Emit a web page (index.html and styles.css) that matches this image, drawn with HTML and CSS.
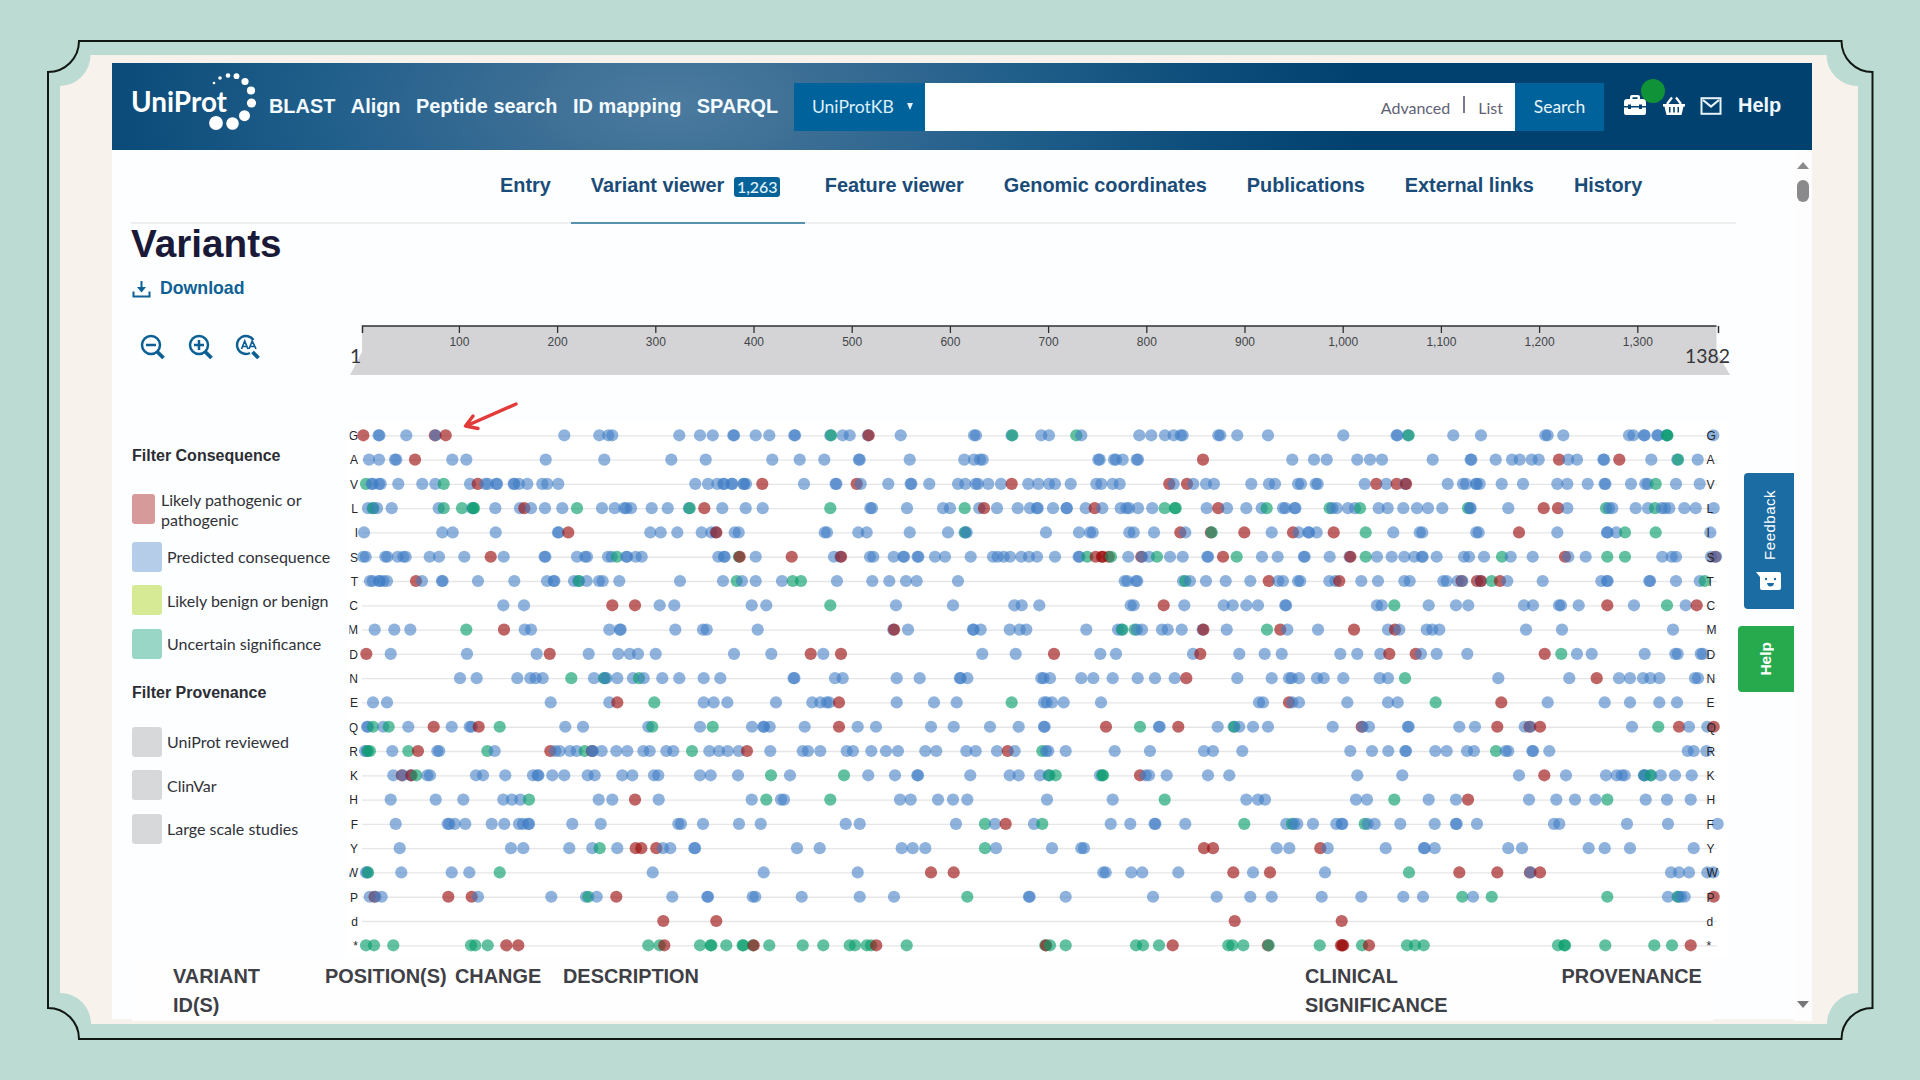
FILE: index.html
```html
<!DOCTYPE html>
<html lang="en">
<head>
<meta charset="utf-8">
<title>Variants | UniProtKB</title>
<link rel="stylesheet" href="styles.css">
</head>
<body>
<svg class="frame" viewBox="0 0 1920 1080" aria-hidden="true">
  <path class="frame-fill" d="M90.500 55H1826.500A31 31 0 0 0 1858 86V993A31 31 0 0 0 1827 1024H91A31 31 0 0 0 60 993V86A31 31 0 0 0 90.500 55Z"/>
  <path class="frame-line" d="M79 41H1841.500A31 31 0 0 0 1872.500 72V1008A31 31 0 0 0 1841.500 1039H79A31 31 0 0 0 48 1008V72A31 31 0 0 0 79 41Z"/>
</svg>
<div class="window">
  <header class="topbar">
    <svg class="logo" viewBox="0 0 130 60">
      <text x="0" y="40.500" textLength="96" lengthAdjust="spacingAndGlyphs">UniProt</text>
      <circle cx="83" cy="12" r="1.300"/><circle cx="89" cy="7" r="1.800"/><circle cx="97" cy="4.500" r="2.300"/>
      <circle cx="105.500" cy="5.200" r="2.900"/><circle cx="114" cy="10.500" r="3.600"/><circle cx="120" cy="19.500" r="4.100"/>
      <circle cx="120.500" cy="32" r="4.600"/><circle cx="113.500" cy="44.700" r="5.500"/><circle cx="101.500" cy="52.500" r="6.300"/><circle cx="85" cy="52" r="6.900"/>
    </svg>
    <nav class="mainnav"><a>BLAST</a><a>Align</a><a>Peptide search</a><a>ID mapping</a><a>SPARQL</a></nav>
    <div class="search">
      <button class="db">UniProtKB <span class="caret"></span></button>
      <div class="field"><span>Advanced</span><i></i><span>List</span></div>
      <button class="go">Search</button>
    </div>
    <div class="tools">
      <div class="toolbox">
        <svg width="24" height="22" viewBox="0 0 24 22"><path fill="#fff" fill-rule="evenodd" d="M7 5V3Q7 1 9 1h6q2 0 2 2v2h3q3 0 3 3v4h-4v-1.500h-3V12H8v-1.500H5V12H1V8q0-3 3-3zM9.500 5h5V3.300h-5zM1 13.500h4V15h3v-1.500h8V15h3v-1.500h4V19q0 2-2 2H3q-2 0-2-2z"/></svg>
        <span class="dot"></span>
      </div>
      <svg class="basket" width="24" height="20" viewBox="0 0 24 20"><path fill="#fff" fill-rule="evenodd" d="M1 8h22v2.500h-1.500L19.500 19h-15L2.500 10.500H1zM7 11v5.500h1.500V11zm4.200 0v5.500h1.600V11zm4.300 0v5.500H17V11z"/><path d="M5 8L10 1.500M19 8L14 1.500" stroke="#fff" stroke-width="2.200" fill="none"/></svg>
      <svg class="mail" width="22" height="18" viewBox="0 0 22 18"><rect x="1.500" y="1.200" width="19" height="15.600" fill="none" stroke="#e8f3fa" stroke-width="2"/><path d="M3 3L11 9.500L19 3" fill="none" stroke="#e8f3fa" stroke-width="2.200"/></svg>
      <a>Help</a>
    </div>
  </header>
  <main>
    <nav class="tabs"><a>Entry</a><a class="active">Variant viewer<b>1,263</b></a><a>Feature viewer</a><a>Genomic coordinates</a><a>Publications</a><a>External links</a><a>History</a></nav>
    <h1>Variants</h1>
    <a class="download"><svg width="19" height="18" viewBox="0 0 19 18"><path d="M1.500 11.500V16.500H17.500V11.500" fill="none" stroke="currentColor" stroke-width="2"/><path d="M9.500 1V9" stroke="currentColor" stroke-width="2"/><path d="M5 7H14L9.500 12.500Z" fill="currentColor"/></svg>Download</a>
    <div class="viewer">
      <div class="zooms">
        <svg viewBox="0 0 26 26"><circle cx="11" cy="11" r="9"/><path class="handle" d="M17 17.500L23.500 24"/><path d="M6 11H16"/></svg>
        <svg viewBox="0 0 26 26"><circle cx="11" cy="11" r="9"/><path class="handle" d="M17 17.500L23.500 24"/><path d="M6 11H16M11 6V16"/></svg>
        <svg viewBox="0 0 26 26"><path d="M18.500 6A9 9 0 1 0 15 19"/><path class="handle" d="M17.500 18L23.500 24"/><path class="thin" d="M6.500 15L9.700 7L13 15M7.500 12.500H12M14 15L17.200 7L21 15M15.200 12.500H19.500"/></svg>
      </div>
      <svg class="ruler" id="ruler" viewBox="0 0 1400 104"></svg>
      <aside class="filters">
        <h2>Filter Consequence</h2>
        <ul>
          <li class="wrap"><i class="path"></i>Likely pathogenic or<br>pathogenic</li>
          <li><i class="pred"></i>Predicted consequence</li>
          <li><i class="benign"></i>Likely benign or benign</li>
          <li><i class="unc"></i>Uncertain significance</li>
        </ul>
        <h2>Filter Provenance</h2>
        <ul>
          <li><i></i>UniProt reviewed</li>
          <li><i></i>ClinVar</li>
          <li><i></i>Large scale studies</li>
        </ul>
      </aside>
      <svg class="plot" id="plot" viewBox="0 0 1400 542"></svg>
    </div>
    <div class="thead"><span>VARIANT<br>ID(S)</span><span>POSITION(S)</span><span>CHANGE</span><span>DESCRIPTION</span><span>CLINICAL<br>SIGNIFICANCE</span><span>PROVENANCE</span></div>
    <div class="scrollbar"><span class="up"></span><span class="thumb"></span><span class="down"></span></div>
    <div class="side feedback"><svg width="26" height="22" viewBox="0 0 26 22"><path fill="#fff" d="M0 1H23Q25 1 25 3V17Q25 19 23 19H6Q4 19 4 17V6Z"/><circle cx="10" cy="8" r="1.200" fill="#1b6ca3"/><circle cx="19" cy="8" r="1.200" fill="#1b6ca3"/><path d="M11 12H18Q17.500 15.500 14.500 15.500T11 12Z" fill="#1b6ca3"/></svg><span>Feedback</span></div>
    <div class="side help"><span>Help</span></div>
  </main>
</div>
<script src="chart.js"></script>
</body>
</html>
```
FILE: styles.css
```css
* { box-sizing: border-box; margin: 0; padding: 0; }
body { width: 1920px; height: 1080px; overflow: hidden; background: #bcdbd2; padding: 63px 108px 61px 112px; font-family: "Liberation Sans", sans-serif; }
button { border: 0; font: inherit; }
.frame { position: absolute; left: 0; top: 0; width: 1920px; height: 1080px; }
.frame-fill { fill: #f7f2eb; }
.frame-line { fill: none; stroke: #111813; stroke-width: 2; }
.window { position: relative; width: 1700px; height: 956px; background: #fcfeff; display: flex; flex-direction: column; }

.topbar { height: 87px; flex: none; display: flex; align-items: center; padding-left: 19px; background: radial-gradient(ellipse 690px 330px at 560px 40px, #4b7b9f 0%, #3f7096 18%, #215f8b 50%, #0d4d7b 78%, #00416f 100%); }
.logo { width: 130px; height: 60px; fill: #fff; margin-top: -11px; flex: none; }
.logo text { font: 700 29px Lato, sans-serif; }
.mainnav { display: flex; gap: 15.500px; width: 526px; margin-left: 8px; color: #f4fbff; font-weight: 700; font-size: 19.900px; white-space: nowrap; }
.search { display: flex; width: 810px; height: 48px; margin-left: -1px; flex: none; font-family: Lato, sans-serif; }
.db { width: 131px; background: #00629b; color: #dcf0fb; font-size: 17.500px; padding-left: 18px; display: flex; align-items: center; gap: 13px; }
.caret { border: 3.500px solid transparent; border-top: 7px solid #e3f3fb; border-bottom: 0; }
.field { flex: 1; background: #fff; display: flex; align-items: center; justify-content: flex-end; padding: 2px 12px 0 0; gap: 13px; color: #5f6173; font-size: 16px; }
.field i { width: 2px; height: 17px; background: #77788a; margin-top: -6px; }
.go { width: 89px; background: #00629b; color: #e6f5fc; font-size: 17.500px; }
.tools { display: flex; align-items: center; color: #eff9ff; margin-left: 20px; font-weight: 700; font-size: 20px; }
.toolbox { position: relative; height: 22px; margin-top: -3px; margin-left: -1px; }
.dot { position: absolute; left: 18px; top: -15px; width: 24px; height: 24px; border-radius: 50%; background: #0f9238; }
.basket { margin: -2px 0 0 15px; }
.mail { margin: -2px 0 0 14px; }
.tools a { margin-left: 16px; margin-top: -2px; }

main { position: relative; flex: 1; display: flex; flex-direction: column; }
.tabs { height: 74px; margin: 0 76px 0 19px; padding-left: 349px; display: flex; border-bottom: 2px solid #edf0f3; }
.tabs a { height: 74px; padding: 25px 20px 0; line-height: 20px; font-size: 19.900px; font-weight: 700; color: #1b4c78; white-space: nowrap; border-bottom: 2px solid transparent; letter-spacing: -.02px; }
.tabs .active { border-bottom-color: #5791ab; display: flex; padding-right: 24.500px; }
.tabs b { font: 500 16px/20px Lato, sans-serif; background: #06639a; color: #e2f3fb; border-radius: 3px; width: 46px; height: 20px; margin: 2px 0 0 10px; text-align: center; }
h1 { margin-left: 19px; font-size: 38.700px; line-height: 40px; height: 40px; color: #1a1a38; }
.download { height: 49px; margin: 0 0 1px 20px; display: flex; align-items: center; gap: 9px; color: #0f6195; font-size: 17.700px; font-weight: 700; }
.viewer { display: grid; grid-template-columns: 228px 1400px; grid-template-rows: 104px 542px; }
.zooms { display: flex; gap: 21.500px; padding: 20px 0 0 28px; }
.zooms svg { width: 26px; height: 26px; fill: none; stroke: #0b5f94; stroke-width: 2.500; }
.zooms .handle { stroke-width: 3.800; }
.zooms .thin { stroke-width: 1.700; }
.ruler, .plot { display: block; width: 1400px; }
.ruler { position: relative; z-index: 1; overflow: visible; }
.ruler text { font-size: 12px; fill: #424448; text-anchor: middle; }
.ruler .end { font: 19.400px Lato, sans-serif; text-anchor: start; fill: #36363a; }
.filters { padding: 26px 0 0 20px; }
.filters h2 { font-size: 16px; line-height: 24px; color: #2c2d33; margin-bottom: 22px; }
.filters ul { list-style: none; display: flex; flex-direction: column; gap: 13.600px; margin-bottom: 22px; }
.filters li { height: 30px; display: flex; align-items: center; gap: 5px; font: 16px/20px Lato, sans-serif; color: #303238; white-space: nowrap; padding-top: 1px; }
.filters li i { width: 30px; height: 30px; border-radius: 3px; background: #d6d8da; flex: none; margin-top: -1px; }
.filters .wrap { height: 38px; gap: 6px; }
.filters .wrap i { width: 23px; }
.filters i.path { background: #d79a9b; }
.filters i.pred { background: #b6cde9; }
.filters i.benign { background: #d6e994; }
.filters i.unc { background: #9ad6c6; }
.plot text { font-size: 12px; fill: #26262a; }
.thead { flex: 1; margin-left: 20px; width: 1581px; padding-left: 41px; padding-top: 1.500px; display: grid; grid-template-columns: 152px 130px 108px 742px 256.500px 1fr; background: #fefefe; color: #3f3f46; font-size: 19.900px; line-height: 29.500px; font-weight: 700; white-space: nowrap; }
.scrollbar { position: absolute; right: 0; top: 0; bottom: 0; width: 18px; background: #fdfdfe; display: flex; flex-direction: column; align-items: center; padding: 12px 0 13px; }
.up { border: 6px solid transparent; border-bottom: 7px solid #8a8a8c; border-top: 0; }
.thumb { width: 12px; height: 22px; border-radius: 6px; background: #8a8a8c; margin-top: 11px; }
.down { border: 6px solid transparent; border-top: 7px solid #77777a; border-bottom: 0; margin-top: auto; }
.side { position: absolute; right: 18px; border-radius: 4px 0 0 4px; color: #fff; display: flex; align-items: center; }
.side span { writing-mode: vertical-rl; transform: rotate(180deg); }
.feedback { top: 323px; width: 50px; height: 136px; background: #1b6ca3; flex-direction: column-reverse; padding-bottom: 16px; gap: 11px; font-size: 15px; letter-spacing: .5px; }
.help { top: 476px; width: 56px; height: 66px; background: #27a94d; justify-content: center; font-size: 15.500px; font-weight: 700; }
```
FILE: chart.js
```js
// Dot positions are in thirds of a pixel, split over four windows of the track.
const WINDOWS = [0, 1080, 2160, 3180];
const ROWS = {
G: ["70r 117B 199b 286P 317r 673b 778b 805b 817b 1018b", "0b 38b 101B 167b 208b 284B 392T 428b 449b 505M 602b 822b 828b 936T 1024b 1047b", "49g 64b 238b 274b 315b 341b 362b 368b 475b 481b 532b 624b 850b 1011B", "25T 160b 243b 436b 443b 490b 687b 700b 733B 773B 801T 801g 940b"],
A: ["87b 117b 165b 169b 225r 337b 379b 617b 793b 994b", "17b 217b 299b 373b 478B 629b 793b 822b 840b 848b", "115b 119b 162b 168b 188b 230b 234b 429r 697b 762b 800b 892b 930b 966b", "98b 213B 287b 336b 359b 395b 416b 477r 505b 531b 611B 658r 754b 833T 893b"],
V: ["78g 95b 98b 117b 122b 175b 247b 286b 311g 390b 413r 436b 444b 470B 522B 537b 562b 607b 622b 655b", "-14b 24b 52b 71B 96B 131B 138b 187r 312b 408B 470r 482b 565b 633B 688b 774b 796b 827b 834b 865b 903b 935r 985b 1015b 1047b 1065b", "32b 109b 124b 158b 179b 328r 341b 381r 400b 438b 462b 574b 627b 645b 714b 723b 767b 773b 914b 949r 979b 1010r", "17M 143b 189b 198b 229B 239b 305b 369b 472b 502b 563b 615B 693b 736b 743b 767g 828b 899b"],
L: ["84b 99T 111b 155b 296b 311g 366g 398T 402g 466b 540b 553r 573b 615b 667b 711g 786b 824b 853b 859b 873b 935b 983b 1048T", "13r 67b 137b 188b 391g 511b 516b 621b 729b 750b 794g 838b 852r 891b 953b 990b 1012B 1059b 1100b", "20b 77b 104r 127b 182b 199b 207b 234b 277b 314g 346G 440b 475r 501b 559b 605b 620g 669b 676b 705B 809g 817b 830b 864b 885b 900g 956b 983b", "10b 51b 84b 127b 204g 211B 325b 431r 474r 502b 618g 627b 637b 707b 744b 765g 785b 795b 808b 853b 887b 941b"],
I: ["72b 307b 338b 467b 655B 685r 931b 962b 1012b", "5b 34b 48M 104b 116b 374b 381b 475b 500b 629b 744b 795T 800b 1038b", "57b 90b 98b 208b 221b 282b 361r 376b 454D 553r 635b 699r 716b 746B 770b 821r 917g 1000b", "59b 67b 229b 236b 357r 472b 622B 649b 675g 767g 931b"],
S: ["70b 77b 136b 142b 173b 190b 197b 269b 297b 373b 452r 491b 615B 711b 735b 741b 804b 815b 831g 860B 887b 905b", "55b 73B 118N 167b 275r 402b 422M 510b 520b 581b 611B 654B 705b 735b 812b 879b 893b 911b 930b 964b 987b 1011b 1065b", "57B 82g 107r 127R 146r 153g 205b 245P 267b 291g 330b 368b 443B 489r 530g 606b 653b 733B 809b 870M 917g 951b 995b", "13b 43b 67B 110b 192b 207b 252b 306g 332b 398b 495r 505b 557b 622g 675g 787b 815b 828b 933b 947P"],
T: ["90b 98b 118B 130b 141b 228r 246b 307B 414b 523b 621b 642B 702b 716T 740b 777b 788b 838b 1020b", "69b 110g 126b 167b 246b 278g 303g 411b 517b 568b 618b 650b 774b", "194b 202b 228b 232b 369b 376g 390b 438b 497b 571b 626r 655b 669b 714b 721b 808b 826b 838r 904b 954b", "13b 29b 130b 140b 173b 186P 231r 242M 275g 300r 322b 428b 604b 622B 749B 828b 899b 914g"],
C: ["490b 552b 817r 885r 959b 1003b", "155b 199b 391g 588b 759b 943b 965b 1018b", "212b 221b 311r 373b 491b 518b 559b 594b 677B 951b 965b 1003g", "86b 168b 205b 372b 399b 477b 483b 536b 622r 702b 801g 857b 890r"],
M: ["104b 163b 211b 379g 492r 554b 573b 808b 841B 1006b", "9b 20b 173b 581M 624b 820B 842b 929b 959b 979b", "79b 174b 186T 224g 231b 246b 306b 323b 365b 429M 500b 621g 661r 682b 774b 882r 984b 1005r 1018b", "80b 97b 118b 378b 486b 819b"],
D: ["79r 152b 381b 590b 629r 746b 835b 869b 894b 947b", "102b 214b 332r 370b 423r 847b 947b 1062r", "121b 168b 399b 421r 538b 614b 665b 841b 892b 961b 988r", "47r 63b 110b 202b 434r 484g 531b 575b 734b 826b 833b 902b 908b"],
N: ["360b 410b 532b 571b 587b 608b 694g 762b 793T 799b 832b 879b 897g 911b 967b 1018b", "11b 61b 282B 405b 428b 590b 659b 781B 802b 1024b 1031b 1050b", "64b 100b 158b 233b 285b 344b 379r 532b 635b 687b 695b 717b 771b 791b 850b 959b 984b", "15g 295b 508b 590r 657b 690b 729b 751b 778b 885b 894b"],
E: ["99b 141b 632b 808b 832r 943g", "11b 41b 82b 228b 337b 361b 380b 388b 417r 590b 702b 770b 935g 1032b 1040b 1056b 1091b", "123b 597b 609b 687r 697b 717b 862b 984b 1013b", "107g 304r 443b 614b 690b 778b 831b"],
Q: ["81b 84b 99g 130b 146g 205b 281r 335b 389b 395b 416r 479g 676b 729b 925b 937g", "0b 38g 156b 191B 209b 314b 417r 473b 528b 693b 761b 870b 956b 1033B", "138r 240g 298B 355r 473b 522T 538b 579b 624b 818b 905r 908b 927b", "25B 178b 225b 292r 374b 390P 420r 696b 775g 837r 867b 922b 941r"],
R: ["75b 82T 90g 157b 205g 234r 292b 298b 442g 464b 631r 646b 659b 690b 710b 734g 757P 757b 785b 829b 862b 910b 929b 979b 1000b 1056g", "28b 57b 83b 116b 141r 211b 308b 324b 361b 440b 459b 514b 558b 594b 676b 709b 799b 827b 891b 923r 944b 1027g 1038b 1045b", "17b 164b 270b 432b 459b 547b 871b 936b 985b", "17B 106b 140b 201b 222b 288g 317b 325b 398B 448b 863b 881b 919b"],
K: ["160b 187P 213M 229g 262b 270b 408b 429b 496b 579b 594B 637b 673b 743b 764b 847b 877b 942b 955b", "0b 32b 114b 213g 270b 432g 505b 585b 653B 811b 929b 956b 1020b 1047T 1067g", "120b 127g 129g 240r 257b 267b 320b 444b 508b 892b", "7b 357b 433r 498b 618b 650b 665b 674b 733T 733b 752T 782b 825b 875b"],
H: ["152b 287b 370b 490b 516b 541b 567g 776b 817b 885r 956b", "155b 199g 243b 252b 391g 600b 632b 714b 759b 802b 1041b", "158b 314g 559b 594b 615b 888b 921b 1003g", "86b 168b 204r 387b 469b 525b 586b 622g 737b 801b 872b"],
F: ["167b 323b 328b 344b 376b 455b 493b 537b 549b 566B 697b 782b 1015b 1023b", "9b 117b 182b 437b 479b 768b 855g 885b 917r 1002b 1027g", "152b 211b 285B 376b 553g 679b 696g 702b 712b 759b 829b 846B 914g 923b 944b", "1b 104b 169B 231b 462b 478b 681b 804b 953b"],
Y: ["179b 513b 550b 688b 757b 779g 832b 887r 904r 949r 969b 991b 1064B", "291b 359b 605b 638b 676b 855g 888b 1056b", "64b 72b 432r 459r 650b 688b 781r 803b 977b", "73B 104b 325b 366b 566b 614b 690b 881b"],
W: ["78b 83T 184b 335b 388b 479g 938b", "191b 473b 693r 761r", "130b 137b 214b 247b 355b 520r 579b 630r 795b", "27g 178r 292r 391P 420r 813b 837b 867b 922b 940b"],
P: ["89b 105P 125b 325r 395r 414b 634b 738b 745g 770b 829r 997b", "23B 158b 166b 305b 479b 582b 802g 988B", "17b 279b 470b 571b 635b 785b 904b", "10b 69b 187g 219b 275g 622g 804b 834T 843b 854b 941r"],
d: ["970r", "49r", "524r 845r", ""],
"*": ["78g 102g 160g 393g 406g 443g 499r 535r 925g 959g 973r", "0g 33G 79g 129G 160N 208g 308g 370g 449g 465g 500g 513g 529r 620g 1037N 1050g", "17g 228g 249g 297g 338r 505g 517g 550g 625D 779g 843r 848R 906g 927r", "21g 45g 71g 474g 494G 616g 763g 816g 872r"]
};
// Capital letters stand for variants stacked at almost the same position.
const STACKS = { B: "bb", G: "gg", R: "rr", T: "bg", M: "br", P: "rb", D: "rg", N: "gr" };
const FILL = { b: "rgba(62,124,196,.58)", g: "rgba(10,158,108,.64)", r: "rgba(155,14,14,.64)" };

let out = '<rect x="7" y="4" width="1381" height="536" fill="#fff"/><clipPath id="edge"><rect x="9.500" y="0" width="20" height="542"/></clipPath>';
Object.keys(ROWS).forEach((name, i) => {
  const y = 17.3 + i * 24.286;
  out += `<path d="M22 ${y + .5}H1377" stroke="#e6e6e8" stroke-width="1.300"/>`;
  out += `<text x="18" y="${y + 4.8}" text-anchor="end" clip-path="url(#edge)">${name}</text>`;
  ROWS[name].forEach((part, w) => part.split(" ").filter(Boolean).forEach(token => {
    const kind = token.slice(-1);
    const x = (parseInt(token, 10) + WINDOWS[w]) / 3;
    [...(STACKS[kind] || kind)].forEach((c, k, all) => {
      const shift = all.length > 1 ? k * .8 - .4 : 0;
      out += `<circle cx="${(x + shift).toFixed(1)}" cy="${y}" r="6.100" fill="${FILL[c]}"/>`;
    });
  }));
  out += `<text x="1366.500" y="${y + 4.8}">${name}</text>`;
});
document.getElementById("plot").innerHTML = out;

let ruler = '<path d="M22 12H1376.500V38L1390 61H10L22 38Z" fill="#d4d4d6"/><path d="M22.500 19V12H1376.500M1378.500 12V19" fill="none" stroke="#2f3033" stroke-width="1.500"/>';
for (let n = 1; n <= 13; n++) {
  const x = 21.2 + n * 98.2;
  ruler += `<path d="M${x} 12V19" stroke="#2f3033" stroke-width="1.300"/><text x="${x}" y="31.500">${(n * 100).toLocaleString("en-US")}</text>`;
}
ruler += '<text class="end" x="10" y="49">1</text><text class="end" x="1345" y="49">1382</text>';
ruler += '<path d="M176 90L126 112M133 102L125.500 112L138 114.500" fill="none" stroke="#e23b3a" stroke-width="3.400" stroke-linecap="round" stroke-linejoin="round"/>';
document.getElementById("ruler").innerHTML = ruler;
```
